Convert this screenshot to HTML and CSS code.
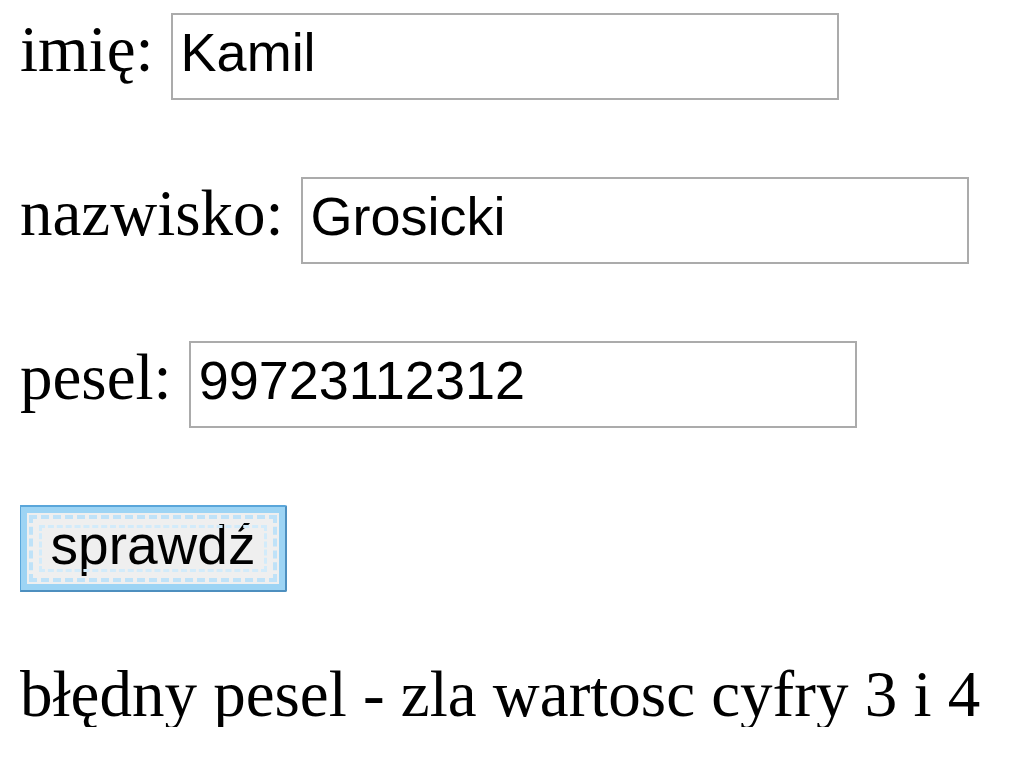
FILE: index.html
```html
<!DOCTYPE html>
<html lang="pl">
<head>
    <meta charset="UTF-8">
    <title>PESEL</title>
    <link rel="stylesheet" href="styles.css">
</head>
<body>
    <form class="form" onsubmit="return false;">
        <div class="row">
            <label for="imie">imię:</label>
            <input type="text" id="imie" class="field" value="Kamil">
        </div>
        <div class="row">
            <label for="nazwisko">nazwisko:</label>
            <input type="text" id="nazwisko" class="field" value="Grosicki">
        </div>
        <div class="row">
            <label for="pesel">pesel:</label>
            <input type="text" id="pesel" class="field" value="99723112312">
        </div>
        <div class="row button-row">
            <button class="check-btn">sprawdź</button>
        </div>
        <p class="result">błędny pesel - zla wartosc cyfry 3 i 4</p>
    </form>
</body>
</html>
```
FILE: styles.css
```css
body {
    margin: 13px 0 0 20px;
    background-color: #fff;
    color: #000;
    font-family: "Liberation Serif", "Times New Roman", serif;
    font-size: 65px;
}
.row {
    display: flex;
    align-items: baseline;
    margin-bottom: 77px;
}
.row label {
    margin-right: 17px;
    line-height: 1;
}
.field {
    box-sizing: border-box;
    width: 668px;
    height: 87px;
    border: 2px solid #ababab;
    padding: 0 8px 10px;
    font-family: "Liberation Sans", Arial, sans-serif;
    font-size: 54px;
    color: #000;
    outline: none;
}
.button-row {
    margin-bottom: 70px;
}
.check-btn {
    position: relative;
    box-sizing: border-box;
    width: 268px;
    height: 87px;
    margin-left: -1px;
    border: 2px solid #5aa6da;
    border-right-color: #4d8fbf;
    border-bottom-color: #4d8fbf;
    border-radius: 2px;
    background: #efefef;
    box-shadow: inset 0 0 0 6px #9dd4f4;
    font-family: "Liberation Sans", Arial, sans-serif;
    font-size: 55px;
    color: #000;
    padding: 0 0 8px;
}
.check-btn::before {
    content: "";
    position: absolute;
    top: 8px;
    left: 8px;
    right: 8px;
    bottom: 8px;
    border: 4px dashed #bfe2f8;
}
.check-btn::after {
    content: "";
    position: absolute;
    top: 18px;
    left: 18px;
    right: 18px;
    bottom: 18px;
    border: 3px dashed #d2ebfa;
}
.result {
    margin: 0;
    line-height: 1;
}
```
